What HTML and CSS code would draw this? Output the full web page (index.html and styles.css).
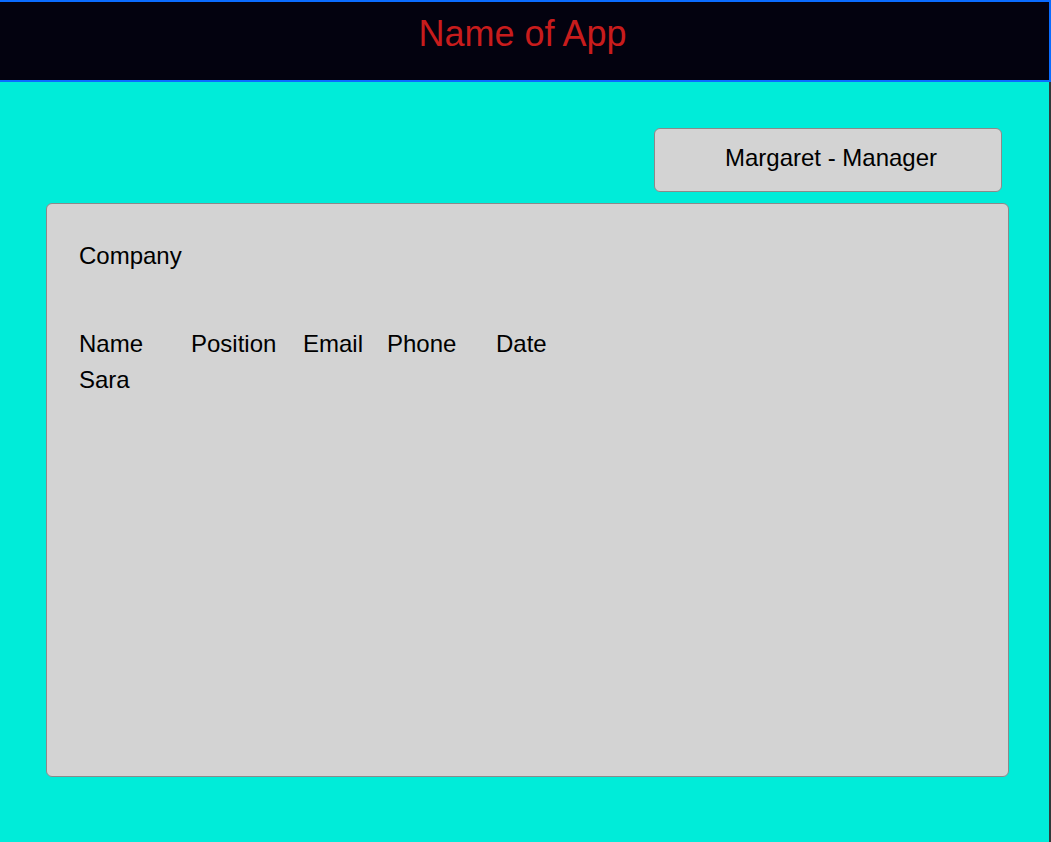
FILE: index.html
```html
<!DOCTYPE html>
<html lang="en">
<head>
<meta charset="utf-8">
<title>Name of App</title>
<link rel="stylesheet" href="styles.css">
</head>
<body>
<header class="app-header">
  <h1 class="app-title">Name of App</h1>
</header>
<main class="app-main">
  <div class="user-row">
    <button class="user-button">Margaret - Manager</button>
  </div>
  <section class="card">
    <div class="company">Company</div>
    <div class="table">
      <div class="cell">Name</div>
      <div class="cell">Position</div>
      <div class="cell">Email</div>
      <div class="cell">Phone</div>
      <div class="cell">Date</div>
      <div class="cell">Sara</div>
      <div class="cell"></div>
      <div class="cell"></div>
      <div class="cell"></div>
      <div class="cell"></div>
    </div>
  </section>
</main>
</body>
</html>
```

FILE: styles.css
```css
html, body {
  margin: 0;
  padding: 0;
  height: 100%;
}

body {
  font-family: "Liberation Sans", Arial, sans-serif;
  background: #00ecd9;
  color: #000;
  display: flex;
  flex-direction: column;
  overflow: hidden;
}

.app-header {
  box-sizing: border-box;
  height: 82px;
  background: #03020f;
  border-top: 2px solid #0a6cff;
  border-bottom: 2px solid #0a6cff;
  border-right: 2px solid #0a6cff;
  display: flex;
  justify-content: center;
  align-items: flex-start;
  padding-top: 11px;
  padding-right: 4px;
  flex-shrink: 0;
}

.app-title {
  margin: 0;
  font-size: 36px;
  font-weight: normal;
  line-height: normal;
  color: #c81c1c;
}

.app-main {
  flex: 1;
  box-sizing: border-box;
  padding: 46px 40px 0 46px;
  border-right: 2px solid #2e3a3a;
  display: flex;
  flex-direction: column;
}

.user-row {
  display: flex;
  justify-content: flex-end;
  padding-right: 7px;
}

.user-button {
  box-sizing: border-box;
  width: 348px;
  height: 64px;
  background: #d3d3d3;
  border: 1px solid #8a8a8a;
  border-radius: 6px;
  font-family: "Liberation Sans", Arial, sans-serif;
  font-size: 24px;
  color: #000;
  padding: 0 0 5px 6px;
  line-height: 36px;
}

.card {
  box-sizing: border-box;
  margin-top: 11px;
  height: 574px;
  background: #d3d3d3;
  border: 1px solid #8a8a8a;
  border-radius: 6px;
  padding: 34px 32px;
  font-size: 24px;
  line-height: 36px;
}

.company {
  margin-bottom: 52px;
}

.table {
  display: grid;
  grid-template-columns: 112px 112px 84px 109px auto;
  grid-auto-rows: 36px;
}
```
